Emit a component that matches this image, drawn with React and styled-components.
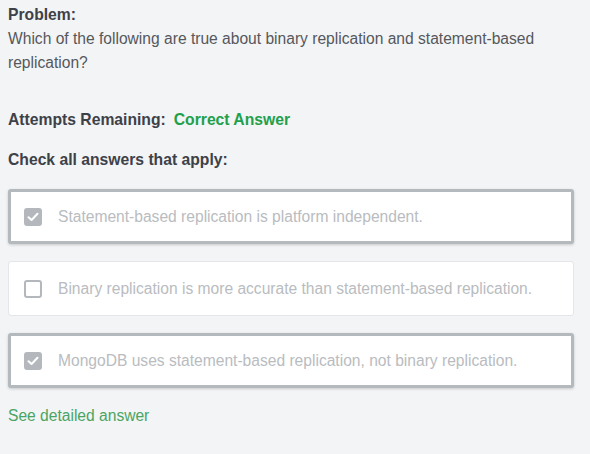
import React from 'react';
import styled, { createGlobalStyle } from 'styled-components';

const GlobalStyle = createGlobalStyle`
  html, body {
    margin: 0;
    padding: 0;
    background: #f3f4f6;
  }
  body {
    font-family: "Liberation Sans", Arial, sans-serif;
  }
`;

const Page = styled.div`
  width: 590px;
  height: 454px;
  padding: 5px 16px 0 8px;
  box-sizing: border-box;
  background: #f3f4f6;
`;

const Label = styled.div`
  font-size: 15.7px;
  font-weight: bold;
  color: #3d4148;
  line-height: 20px;
`;

const Question = styled.p`
  margin: 2px 0 0;
  font-size: 15.6px;
  line-height: 24px;
  color: #55585c;
`;

const Attempts = styled(Label)`
  margin-top: 35px;
  display: flex;
  gap: 8px;
`;

const Status = styled.span`
  color: #21a04b;
`;

const Instruction = styled(Label)`
  margin-top: 20px;
`;

const Answers = styled.div`
  margin-top: 19px;
  display: flex;
  flex-direction: column;
  gap: 17px;
`;

const Card = styled.div`
  display: flex;
  align-items: center;
  gap: 16px;
  height: 55px;
  box-sizing: border-box;
  background: #fff;
  border-radius: 3px;
  border: ${({ selected }) => (selected ? '3px solid #b4b9be' : '1px solid #e4e6e9')};
  padding-left: ${({ selected }) => (selected ? '13px' : '15px')};
  box-shadow: ${({ selected }) => (selected ? '0 1px 3px rgba(0,0,0,0.18)' : 'none')};
`;

const Box = styled.span`
  width: 18px;
  height: 18px;
  box-sizing: border-box;
  border-radius: 3px;
  flex-shrink: 0;
  display: flex;
  align-items: center;
  justify-content: center;
  background: ${({ checked }) => (checked ? '#b4b8bd' : '#fff')};
  border: ${({ checked }) => (checked ? 'none' : '2px solid #b4b8bd')};
`;

const AnswerText = styled.span`
  font-size: 15.6px;
  color: #b9bcc0;
`;

const DetailLink = styled.a`
  display: block;
  margin-top: 19px;
  font-size: 15.6px;
  color: #4aa463;
  text-decoration: none;
`;

const answers = [
  { text: 'Statement-based replication is platform independent.', checked: true },
  { text: 'Binary replication is more accurate than statement-based replication.', checked: false },
  { text: 'MongoDB uses statement-based replication, not binary replication.', checked: true },
];

function Check() {
  return (
    <svg width="12" height="10" viewBox="0 0 12 10">
      <path d="M1.5 5.2 L4.6 8 L10.5 1.8" fill="none" stroke="#fff" strokeWidth="2" strokeLinecap="round" strokeLinejoin="round" />
    </svg>
  );
}

export default function App() {
  return (
    <Page>
      <GlobalStyle />
      <Label>Problem:</Label>
      <Question>
        Which of the following are true about binary replication and statement-based replication?
      </Question>
      <Attempts>
        Attempts Remaining: <Status>Correct Answer</Status>
      </Attempts>
      <Instruction>Check all answers that apply:</Instruction>
      <Answers>
        {answers.map((a) => (
          <Card key={a.text} selected={a.checked}>
            <Box checked={a.checked}>{a.checked && <Check />}</Box>
            <AnswerText>{a.text}</AnswerText>
          </Card>
        ))}
      </Answers>
      <DetailLink href="#">See detailed answer</DetailLink>
    </Page>
  );
}
